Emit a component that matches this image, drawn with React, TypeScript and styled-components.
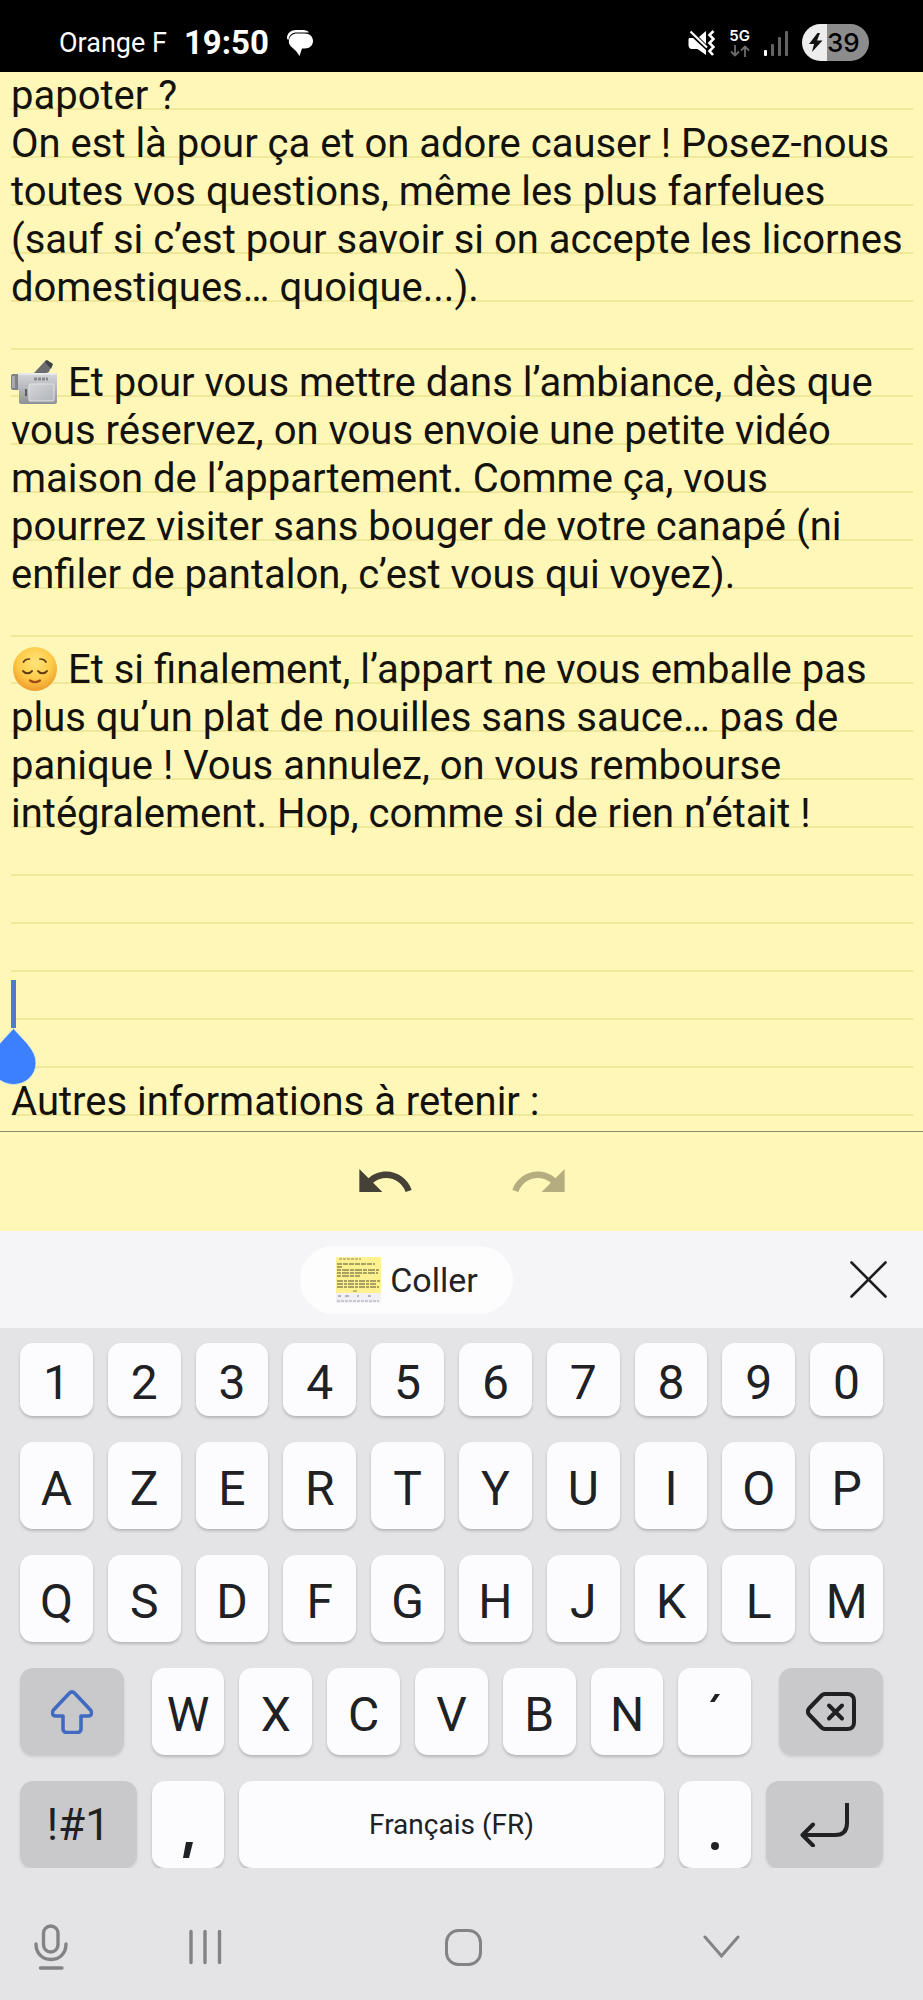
import React from "react";
import styled, { createGlobalStyle } from "styled-components";

const GlobalStyle = createGlobalStyle`
  * { box-sizing: border-box; }
  body { margin: 0; background: #e4e4e6; }
  button { border: 0; margin: 0; padding: 0; background: none; font: inherit; color: inherit; cursor: pointer; }
  svg { display: block; }
`;

const Screen = styled.div`
  min-height: 100vh;
  display: flex;
  flex-direction: column;
  font-family: Roboto, "Liberation Sans", sans-serif;
`;

/* Status bar */

const StatusBar = styled.header`
  height: 72px;
  padding: 13px 54px 0 59px;
  display: flex;
  align-items: center;
  justify-content: space-between;
  background: #000;
  color: #fff;
`;

const StatusGroup = styled.div<{ $gap: number }>`
  display: flex;
  align-items: center;
  gap: ${(p) => p.$gap}px;
`;

const Carrier = styled.span`
  font-size: 27px;
`;

const Clock = styled.time`
  font-size: 33px;
  font-weight: 700;
`;

const Network = styled.div`
  display: flex;
  flex-direction: column;
  align-items: center;
  gap: 2px;
  font: 600 15px/15px Inter, sans-serif;
`;

const Battery = styled.div`
  width: 67px;
  height: 37px;
  border-radius: 19px;
  padding-left: 7px;
  display: flex;
  align-items: center;
  gap: 4px;
  background: linear-gradient(90deg, #ededed 37%, #8c8c8c 37%);
  color: #000;
  font: 500 26px/37px Inter, sans-serif;
`;

/* Note */

const Note = styled.main`
  flex: 1;
  overflow: hidden;
  background: #fff7b8;
  border-bottom: 1px solid #8d8a72;
`;

const NoteText = styled.div`
  margin: 0 10px 0 11px;
  font-size: 40px;
  line-height: 48px;
  color: #14120c;
  outline: none;
`;

const Paragraph = styled.p`
  position: relative;
  margin: 0;
  padding-right: 6px;
  min-height: 48px;
  background: linear-gradient(transparent 36px, #f0e79a 36px, #f0e79a 38px, transparent 38px) 0 0 / 100% 48px;
`;

const ParagraphBreak = styled(Paragraph)`
  min-height: 47px;
`;

const Emoji = styled.svg`
  display: inline-block;
  width: 47px;
  height: 44px;
  vertical-align: -8px;
`;

const Caret = styled.span`
  position: absolute;
  z-index: 1;
  top: -2px;
  left: -21px;
`;

const EditBar = styled.div`
  height: 99px;
  padding-bottom: 3px;
  display: flex;
  align-items: center;
  justify-content: center;
  gap: 100px;
  background: #fff7b8;
`;

const EditButton = styled.button`
  color: #454136;
  &:disabled { color: #b5ad80; }
`;

/* Keyboard */

const ClipboardBar = styled.div`
  height: 97px;
  display: flex;
  align-items: center;
  background: #f5f5f8;
`;

const ClipboardItems = styled.div`
  flex: 1;
  display: flex;
  justify-content: center;
`;

const PasteButton = styled.button`
  height: 68px;
  padding: 0 35px;
  border-radius: 34px;
  display: flex;
  align-items: center;
  gap: 8px;
  background: #fdfdfe;
  color: #232326;
  font-size: 34px;
`;

const CloseButton = styled.button`
  width: 110px;
  height: 68px;
  display: flex;
  align-items: center;
  justify-content: center;
`;

const Keyboard = styled.section`
  padding: 15px 40px 0 20px;
  display: flex;
  flex-direction: column;
  gap: 26px;
  background: #e4e4e6;
`;

const KeyRow = styled.div<{ $height?: number }>`
  display: grid;
  grid-template-columns: repeat(20, 1fr);
  column-gap: 15px;
  height: ${(p) => p.$height ?? 87}px;
`;

const Key = styled.button<{ $span?: number; $size?: number }>`
  grid-column: span ${(p) => p.$span ?? 2};
  min-width: 0;
  display: flex;
  align-items: center;
  justify-content: center;
  border-radius: 13px;
  background: #fcfcfe;
  box-shadow: 0 2px 3px rgba(0, 0, 0, 0.2);
  color: #202124;
  font-size: ${(p) => p.$size ?? 48}px;
  white-space: nowrap;
`;

const CharKey = styled(Key)`
  padding-top: 5px;
`;

const ActionKey = styled(Key)`
  background: #c9c9cb;
  box-shadow: 0 2px 3px rgba(0, 0, 0, 0.1);
`;

const EdgeKey = styled(ActionKey)<{ $side: "start" | "end" }>`
  width: 89%;
  justify-self: ${(p) => p.$side};
`;

const PunctuationKey = styled(Key)`
  align-items: flex-end;
  padding-bottom: 10px;
`;

const NavBar = styled.nav`
  height: 132px;
  padding: 26px 72px 0 0;
  display: grid;
  grid-template-columns: 76px 1fr 1fr 1fr;
  align-items: center;
  background: #e4e4e6;
`;

const NavButton = styled.button<{ $inset?: number }>`
  height: 56px;
  padding-left: ${(p) => p.$inset ?? 0}px;
  display: flex;
  align-items: center;
  justify-content: center;
  color: #838386;
`;

const MessageIcon = () => (
  <svg width="28" height="28" viewBox="0 0 28 28" aria-label="Message">
    <path d="M1 9C1 4 5 1 10 1h7c3 0 5 1 6 2.500H11C6 3.500 3 6 2.500 11 1.500 10.500 1 10 1 9z" fill="#fff" />
    <path d="M11 4.500h7.500C24 4.500 27 8 27 12s-3 7.500-8.500 7.500H16L13.500 27 10 22 4.500 17C3 15 2.500 13 3 11c.6-4 4-6.500 8-6.500z" fill="#fff" />
  </svg>
);

const MuteIcon = () => (
  <svg width="27" height="26" viewBox="0 0 27 26" fill="#fff" aria-label="Vibreur">
    <path d="M1 8h4l13 12v5L9.500 19H4C1.500 19 .5 17 .5 15v-4C.5 9.500.600 8.500 1 8z" />
    <path d="M11 7 18 1v13z" />
    <path d="M2.500 1.500 19 17.500" stroke="#fff" strokeWidth="2.200" />
    <path d="m25.500 1-4 4 4 4-4 4 4 4-4 4 3.500 4" fill="none" stroke="#fff" strokeWidth="2.600" />
  </svg>
);

const DataArrows = () => (
  <svg width="20" height="12" viewBox="0 0 20 12" fill="none" stroke="#6c6c6c" strokeWidth="1.800" aria-hidden="true">
    <path d="M5 0v10.500M1 6.500l4 4 4-4M15 12V1.500M11 5.500l4-4 4 4" />
  </svg>
);

const SignalIcon = () => (
  <svg width="24" height="26" viewBox="0 0 24 26" aria-label="Signal">
    <rect x="0" y="20" width="3" height="6" rx="1" fill="#fff" />
    <g fill="#646464">
      <rect x="7" y="14" width="3" height="12" rx="1" />
      <rect x="14" y="7" width="3" height="19" rx="1" />
      <rect x="21" y="1" width="3" height="25" rx="1" />
    </g>
  </svg>
);

const BoltIcon = () => (
  <svg width="14" height="19" viewBox="0 0 14 19" aria-hidden="true">
    <path d="M8.500 0 0 11h5l-2 8L13.500 7.500H8L11 0z" fill="#111" />
  </svg>
);

const CameraEmoji = () => (
  <Emoji viewBox="0 0 47 44" role="img" aria-label="Caméscope">
    <defs>
      <linearGradient id="camBody" x1="0" y1="0" x2="0" y2="1">
        <stop offset="0" stopColor="#d5d7da" />
        <stop offset=".45" stopColor="#b8babf" />
        <stop offset="1" stopColor="#8e9196" />
      </linearGradient>
      <linearGradient id="camPanel" x1="0" y1="0" x2="1" y2="1">
        <stop offset="0" stopColor="#d3d5d9" />
        <stop offset="1" stopColor="#b2b5ba" />
      </linearGradient>
    </defs>
    <path d="m23 13 12-13 6 4-3 8-7 3z" fill="#6a6c6e" />
    <path d="m34 2 2-2 6 4-2 5z" fill="#3f4143" />
    <rect x="0" y="14" width="9" height="16" rx="2" fill="#7f8286" />
    <rect x="1" y="16" width="3" height="12" fill="#a6a9ad" />
    <path d="M7 13h37q2 0 2 2v27q0 2-2 2H10q-2 0-2-2V30H7z" fill="url(#camBody)" />
    <path d="M7 13h38v2H7z" fill="#e6e8ea" />
    <path d="M23 19h14" stroke="#85888d" strokeWidth="3" strokeDasharray="3 1" />
    <rect x="18" y="24" width="25" height="17" rx="1" fill="url(#camPanel)" stroke="#e1e3e6" />
    <rect x="14" y="29" width="2" height="7" fill="#5c5f64" />
  </Emoji>
);

const RelievedEmoji = () => (
  <Emoji viewBox="0 0 47 44" role="img" aria-label="Visage soulagé">
    <defs>
      <radialGradient id="face" cx=".5" cy=".35" r=".65">
        <stop offset="0" stopColor="#ffe57a" />
        <stop offset=".6" stopColor="#fdca47" />
        <stop offset="1" stopColor="#ee9a2a" />
      </radialGradient>
    </defs>
    <circle cx="24" cy="22" r="22" fill="url(#face)" />
    <g fill="none" stroke="#5f3b13" strokeWidth="1.700" strokeLinecap="round">
      <path d="M12.500 15c1-2 3.500-3 6-3M29 12c3 0 5 1 6 3" />
      <path d="M12 24c2 3 7 3 9 0M27 24c2 3 7 3 9 0" strokeWidth="2" />
      <path d="M19 33.500c3 2 7 2 10 0" stroke="#a14a16" strokeWidth="2.200" />
    </g>
  </Emoji>
);

const CaretHandle = () => (
  <Caret aria-hidden="true">
    <svg width="46" height="106" viewBox="0 0 46 106">
      <rect x="21" y="0" width="5" height="48" fill="#4d7ccf" />
      <path
        d="M23.500 48.500C29 55 37 62 42 70c3 5 4 9 4 13 0 12-10 21.500-22.500 21.500S1 95 1 83c0-4 1-8 4-13 5-8 13-15 18.500-21.500z"
        fill="#3d80ff"
        stroke="#d9e8dc"
        strokeWidth="1"
      />
    </svg>
  </Caret>
);

const UndoIcon = ({ flip = false }: { flip?: boolean }) => (
  <svg width="53" height="23" viewBox="2 7 20.470 9" aria-hidden="true">
    <path
      transform={flip ? "matrix(-1 0 0 1 24.470 0)" : undefined}
      d="M12.500 8c-2.650 0-5.050.990-6.900 2.600L2 7v9h9l-3.620-3.620c1.390-1.160 3.160-1.880 5.120-1.880 3.540 0 6.550 2.310 7.600 5.500l2.370-.780C21.080 11.030 17.150 8 12.500 8z"
      fill="currentColor"
    />
  </svg>
);

const NoteThumbnail = () => (
  <svg width="47" height="46" viewBox="0 0 47 46" aria-hidden="true">
    <rect x="1" width="45" height="36" fill="#fdf192" />
    <rect x="1" y="36" width="45" height="10" fill="#f1f1f5" />
    <g stroke="#8d8650" strokeWidth="1.500">
      <path d="M4 2h22" stroke="#b5ac6c" strokeDasharray="3 1" />
      <path d="M2 7h38M2 10h6" strokeDasharray="5 1" />
      <path d="M2 13h42M2 16h41M2 19h23" strokeDasharray="4 1 7 1" />
      <path d="M2 24h43M2 27h40M2 30h42" strokeDasharray="6 1 3 1" />
    </g>
    <path d="M18 34h4" stroke="#8a8350" />
    <path d="M3 39h3M10 39h4M22 39h2M33 39h3" stroke="#b4b4c0" strokeWidth="2" />
    <path d="M2 44h42" stroke="#c9c9d4" strokeWidth="2" strokeDasharray="3 1" />
  </svg>
);

const CloseIcon = () => (
  <svg width="37" height="37" viewBox="0 0 37 37" stroke="#1e1e20" strokeWidth="2.600" strokeLinecap="round" aria-hidden="true">
    <path d="m1.500 1.500 34 34M35.500 1.500l-34 34" />
  </svg>
);

const ShiftIcon = () => (
  <svg width="42" height="44" viewBox="0 0 42 44" fill="none" stroke="#416bc0" strokeWidth="3.600" strokeLinejoin="round" aria-hidden="true">
    <path d="M18.800 2.800c1.300-1.300 3.100-1.300 4.400 0L39.500 20c2 2.500 1 6-2 6H30v13c0 2-1.500 3.500-3.500 3.500h-11C13.500 42.500 12 41 12 39V26H4.500c-3 0-4-3.500-2-6z" />
  </svg>
);

const BackspaceIcon = () => (
  <svg width="50" height="40" viewBox="0 0 50 40" fill="none" stroke="#202124" strokeWidth="4" strokeLinecap="round" strokeLinejoin="round" aria-hidden="true">
    <path d="M19 2h22.500c4 0 6.500 2.500 6.500 6.500v22c0 4-2.500 6.500-6.500 6.500H19c-1.500 0-2.500-.5-3.500-1.500L3 22.500c-1.500-2-1.500-4 0-6L15.500 3.500C16.500 2.500 17.500 2 19 2z" />
    <path d="m23 13.500 13 13M36 13.500l-13 13" />
  </svg>
);

const EnterIcon = () => (
  <svg width="49" height="44" viewBox="0 0 49 44" fill="none" stroke="#202124" strokeWidth="4" aria-hidden="true">
    <path d="M47 0v20c0 8-4 12-12 12H2" />
    <path d="M13 21.500 2.500 32 13 42.500" strokeLinecap="round" strokeLinejoin="round" />
  </svg>
);

const CommaIcon = () => (
  <svg width="10" height="16" viewBox="0 0 10 16" aria-hidden="true">
    <path d="M3 0h7L6 16H0z" fill="#202124" />
  </svg>
);

const DotIcon = () => (
  <svg width="8" height="24" viewBox="0 0 8 24" aria-hidden="true">
    <circle cx="4" cy="12" r="4" fill="#202124" />
  </svg>
);

const AcuteIcon = () => (
  <svg width="10" height="36" viewBox="0 0 10 36" aria-hidden="true">
    <path d="M5 0h5L4.500 8H0z" fill="#202124" />
  </svg>
);

const MicIcon = () => (
  <svg width="34" height="46" viewBox="0 0 34 46" fill="none" stroke="currentColor" strokeWidth="3.400" strokeLinecap="round" aria-hidden="true">
    <rect x="9.500" y="2" width="14.500" height="26" rx="7.250" />
    <path d="M2 20c0 9 6 15.500 15 15.500S32 29 32 20M6.500 44h21.500" />
  </svg>
);

const RecentsIcon = () => (
  <svg width="34" height="36" viewBox="0 0 34 36" stroke="currentColor" strokeWidth="3.400" strokeLinecap="round" aria-hidden="true">
    <path d="M3 2.500v31M17 2.500v31M31.500 2.500v31" />
  </svg>
);

const HomeIcon = () => (
  <svg width="37" height="37" viewBox="0 0 37 37" fill="none" stroke="currentColor" strokeWidth="3" aria-hidden="true">
    <rect x="1.500" y="1.500" width="34" height="34" rx="12" />
  </svg>
);

const HideIcon = () => (
  <svg width="37" height="24" viewBox="0 0 37 24" fill="none" stroke="currentColor" strokeWidth="3" strokeLinecap="round" aria-hidden="true">
    <path d="M2 2l16.500 19L35 2" />
  </svg>
);

export default function App() {
  return (
    <Screen>
      <GlobalStyle />
      <StatusBar>
        <StatusGroup $gap={17}>
          <Carrier>Orange F</Carrier>
          <Clock>19:50</Clock>
          <MessageIcon />
        </StatusGroup>
        <StatusGroup $gap={14}>
          <MuteIcon />
          <Network>
            <span>5G</span>
            <DataArrows />
          </Network>
          <SignalIcon />
          <Battery>
            <BoltIcon />
            39
          </Battery>
        </StatusGroup>
      </StatusBar>

      <Note>
        <NoteText
          role="textbox"
          aria-multiline="true"
          aria-label="Note"
          contentEditable
          suppressContentEditableWarning
          spellCheck={false}
          lang="fr"
        >
          <Paragraph>papoter ?</Paragraph>
          <Paragraph>
            On est là pour ça et on adore causer ! Posez-nous toutes vos questions, même les plus
            farfelues (sauf si c’est pour savoir si on accepte les licornes domestiques… quoique...).
          </Paragraph>
          <ParagraphBreak />
          <Paragraph>
            <CameraEmoji /> Et pour vous mettre dans l’ambiance, dès que vous réservez, on vous envoie
            une petite vidéo maison de l’appartement. Comme ça, vous pourrez visiter sans bouger de
            votre canapé (ni enfiler de pantalon, c’est vous qui voyez).
          </Paragraph>
          <ParagraphBreak />
          <Paragraph>
            <RelievedEmoji /> Et si finalement, l’appart ne vous emballe pas plus qu’un plat de
            nouilles sans sauce… pas de panique ! Vous annulez, on vous rembourse intégralement. Hop,
            comme si de rien n’était !
          </Paragraph>
          <Paragraph />
          <Paragraph />
          <Paragraph />
          <Paragraph>
            <CaretHandle />
          </Paragraph>
          <Paragraph />
          <Paragraph>Autres informations à retenir :</Paragraph>
        </NoteText>
      </Note>

      <EditBar>
        <EditButton aria-label="Annuler">
          <UndoIcon />
        </EditButton>
        <EditButton aria-label="Rétablir" disabled>
          <UndoIcon flip />
        </EditButton>
      </EditBar>

      <ClipboardBar>
        <ClipboardItems>
          <PasteButton>
            <NoteThumbnail />
            Coller
          </PasteButton>
        </ClipboardItems>
        <CloseButton aria-label="Fermer">
          <CloseIcon />
        </CloseButton>
      </ClipboardBar>

      <Keyboard aria-label="Clavier">
        <KeyRow $height={73}>
          {[..."1234567890"].map((k) => (
            <CharKey key={k}>{k}</CharKey>
          ))}
        </KeyRow>
        <KeyRow>
          {[..."AZERTYUIOP"].map((k) => (
            <CharKey key={k}>{k}</CharKey>
          ))}
        </KeyRow>
        <KeyRow>
          {[..."QSDFGHJKLM"].map((k) => (
            <CharKey key={k}>{k}</CharKey>
          ))}
        </KeyRow>
        <KeyRow>
          <EdgeKey $span={3} $side="start" aria-label="Majuscule">
            <ShiftIcon />
          </EdgeKey>
          {[..."WXCVBN"].map((k) => (
            <CharKey key={k}>{k}</CharKey>
          ))}
          <Key aria-label="Accent aigu">
            <AcuteIcon />
          </Key>
          <EdgeKey $span={3} $side="end" aria-label="Effacer">
            <BackspaceIcon />
          </EdgeKey>
        </KeyRow>
        <KeyRow>
          <ActionKey $span={3} $size={44}>!#1</ActionKey>
          <PunctuationKey aria-label="Virgule">
            <CommaIcon />
          </PunctuationKey>
          <Key $span={10} $size={28}>Français (FR)</Key>
          <PunctuationKey aria-label="Point">
            <DotIcon />
          </PunctuationKey>
          <ActionKey $span={3} aria-label="Entrée">
            <EnterIcon />
          </ActionKey>
        </KeyRow>
      </Keyboard>

      <NavBar aria-label="Navigation">
        <NavButton $inset={25} aria-label="Saisie vocale">
          <MicIcon />
        </NavButton>
        <NavButton aria-label="Applications récentes">
          <RecentsIcon />
        </NavButton>
        <NavButton aria-label="Accueil">
          <HomeIcon />
        </NavButton>
        <NavButton aria-label="Masquer le clavier">
          <HideIcon />
        </NavButton>
      </NavBar>
    </Screen>
  );
}
